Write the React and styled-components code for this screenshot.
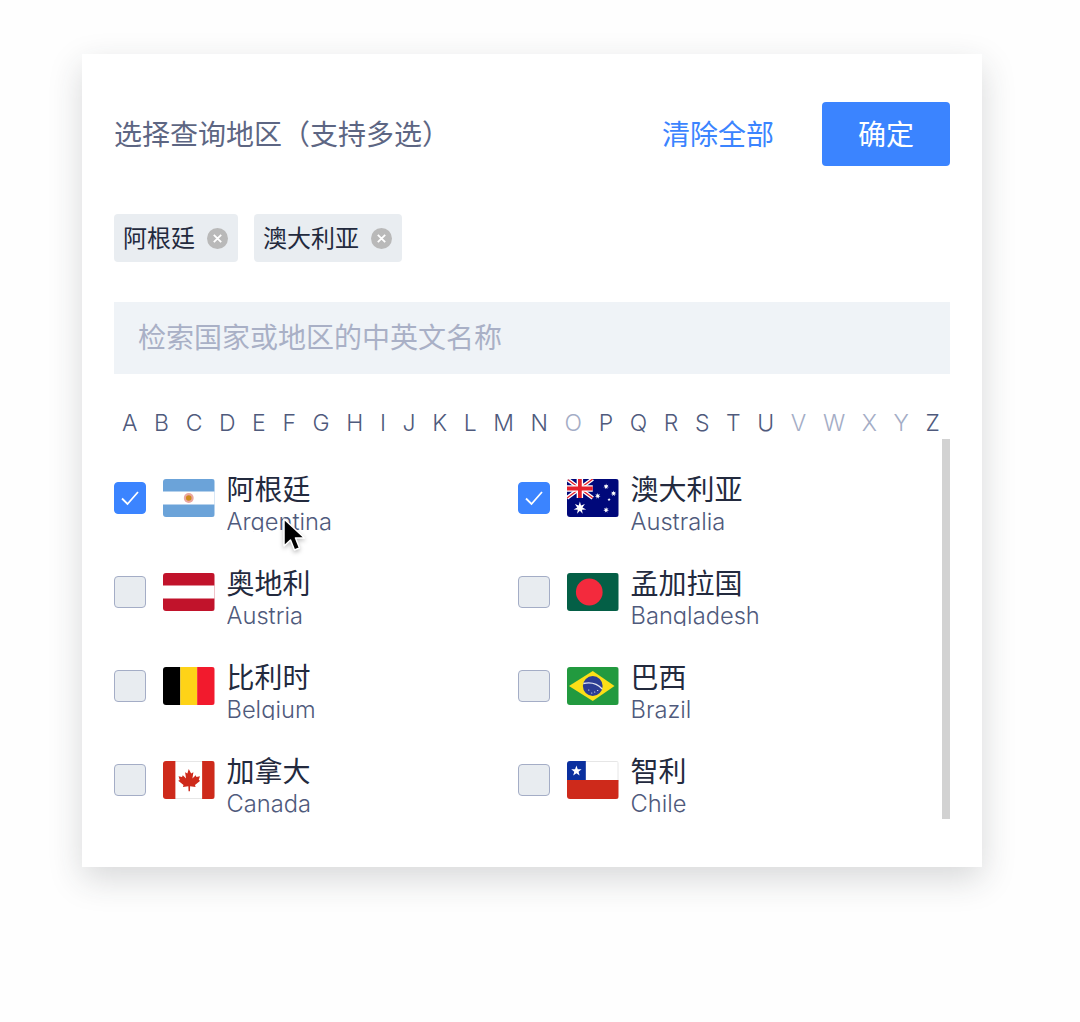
import React from 'react';
import styled, { createGlobalStyle } from 'styled-components';

const Global = createGlobalStyle`
  html, body { margin: 0; padding: 0; background: #fefefe; }
  body { font-family: "Noto Sans CJK SC", "Liberation Sans", sans-serif; }
  * { box-sizing: border-box; }
`;
const Page = styled.div`
  width: 1080px;
  height: 1022px;
  padding: 54px 98px 155px 82px;
  overflow: hidden;
  position: relative;
`;
const Card = styled.div`
  width: 900px;
  height: 813px;
  background: #fff;
  padding: 48px 32px 0;
  box-shadow: 0 12px 32px rgba(40, 44, 52, 0.18);
`;
const Header = styled.div`
  display: flex;
  align-items: center;
  height: 64px;
`;
const Title = styled.div`
  flex: 1;
  font-size: 28px;
  color: #5d6683;
  margin-bottom: 2px;
`;
const Clear = styled.div`
  font-size: 28px;
  color: #3b84ff;
  margin-right: 48px;
  margin-bottom: 2px;
`;
const Confirm = styled.div`
  width: 128px;
  height: 64px;
  background: #3b84ff;
  border-radius: 4px;
  color: #fff;
  font-size: 28px;
  padding-bottom: 2px;
  display: flex;
  align-items: center;
  justify-content: center;
`;
const Tags = styled.div`
  display: flex;
  gap: 16px;
  margin-top: 48px;
`;
const Tag = styled.div`
  height: 48px;
  background: #e9edf1;
  border-radius: 4px;
  padding: 0 10px 3px 9px;
  display: flex;
  align-items: center;
  gap: 12px;
  font-size: 24px;
  color: #232a3e;
`;
const TagClose = styled.svg`
  width: 21px;
  height: 21px;
  display: block;
  margin-top: 3px;
`;
const Search = styled.div`
  height: 72px;
  margin-top: 40px;
  background: #eff3f7;
  padding: 0 0 4px 24px;
  display: flex;
  align-items: center;
  font-size: 28px;
  color: #a9b0c6;
`;
const Letters = styled.div`
  display: flex;
  justify-content: space-between;
  padding: 0 10px 0 8px;
  margin-top: 32px;
  height: 33px;
  align-items: center;
`;
const Letter = styled.span`
  font-family: Inter, "Liberation Sans", sans-serif;
  font-size: 23px;
  font-weight: 300;
  color: ${p => (p.$off ? '#a4adc6' : '#4f5a7c')};
`;
const ListWrap = styled.div`
  display: flex;
  height: 380px;
`;
const List = styled.div`
  flex: 1;
  height: 380px;
  overflow: hidden;
  padding-top: 12px;
  display: grid;
  grid-template-columns: 404px 404px;
  grid-auto-rows: 94px;
`;
const Scrollbar = styled.div`
  width: 8px;
  height: 380px;
  background: #d2d2d2;
`;
const Row = styled.div`
  display: flex;
  align-items: center;
`;
const Check = styled.div`
  width: 32px;
  height: 32px;
  border-radius: 4px;
  flex: none;
  display: flex;
  align-items: center;
  justify-content: center;
  background: ${p => (p.$on ? '#3b84ff' : '#e8ecf0')};
  border: 1px solid ${p => (p.$on ? '#3b84ff' : '#a4adc6')};
`;
const FlagBox = styled.div`
  width: 51.5px;
  height: 38px;
  margin-left: 17px;
  margin-right: 12px;
  border-radius: 3px;
  overflow: hidden;
  flex: none;
  svg { display: block; width: 100%; height: 100%; }
`;
const Names = styled.div`
  height: 60px;
  overflow: hidden;
  margin-top: 8px;
`;
const Zh = styled.div`
  font-size: 28px;
  line-height: 32px;
  color: #232a3e;
`;
const En = styled.div`
  font-family: Inter, "Liberation Sans", sans-serif;
  font-size: 23.7px;
  font-weight: 300;
  line-height: 28px;
  margin-top: 4px;
  color: #4f5a7c;
  white-space: nowrap;
`;
const Cursor = styled.svg`
  position: absolute;
  left: 280px;
  top: 516px;
  width: 28px;
  height: 40px;
  filter: drop-shadow(0 2px 2px rgba(0,0,0,.25));
`;

const Tick = () => (
  <svg width="20" height="16" viewBox="0 0 20 16">
    <path d="M2 8.5 7.5 14 18 2" fill="none" stroke="#fff" strokeWidth="1.8" />
  </svg>
);

const Star = ({ x, y, r, n = 5, fill = '#fff' }) => {
  const pts = [];
  for (let i = 0; i < n * 2; i++) {
    const a = (Math.PI * i) / n - Math.PI / 2;
    const rr = i % 2 ? r * 0.42 : r;
    pts.push(`${(x + rr * Math.cos(a)).toFixed(2)},${(y + rr * Math.sin(a)).toFixed(2)}`);
  }
  return <polygon points={pts.join(' ')} fill={fill} />;
};

const Frame = ({ children }) => (
  <svg viewBox="0 0 52 38" preserveAspectRatio="none">
    {children}
  </svg>
);

const flags = {
  ar: (
    <Frame>
      <rect width="52" height="38" fill="#6ba3d9" />
      <rect y="12.500" width="52" height="13" fill="#fff" />
      <circle cx="26" cy="19" r="5" fill="#eba79f" />
      <circle cx="26" cy="19" r="2.800" fill="#cf8a1c" />
    </Frame>
  ),
  au: (
    <Frame>
      <rect width="52" height="38" fill="#00087a" />
      <path d="M0 0 26 19M26 0 0 19" stroke="#fff" strokeWidth="4" />
      <path d="M0 0 26 19M26 0 0 19" stroke="#e6202c" strokeWidth="1.400" />
      <path d="M13 0v19M0 9.500h26" stroke="#fff" strokeWidth="6.500" />
      <path d="M13 0v19M0 9.500h26" stroke="#e6202c" strokeWidth="3.800" />
      <Star x={13} y={29} r={6.5} n={7} />
      <Star x={39.5} y={7.5} r={3} n={7} />
      <Star x={31} y={17} r={3} n={7} />
      <Star x={47} y={14.5} r={3} n={7} />
      <Star x={42.5} y={20.5} r={1.8} />
      <Star x={39.5} y={31} r={3} n={7} />
    </Frame>
  ),
  at: (
    <Frame>
      <rect width="52" height="38" fill="#c1132b" />
      <rect y="12.500" width="52" height="13" fill="#fff" />
    </Frame>
  ),
  bd: (
    <Frame>
      <rect width="52" height="38" fill="#045f46" />
      <circle cx="22.500" cy="19" r="13.500" fill="#f32a3d" />
    </Frame>
  ),
  be: (
    <Frame>
      <rect width="17.500" height="38" fill="#000" />
      <rect x="17.500" width="17" height="38" fill="#fed317" />
      <rect x="34.500" width="17.500" height="38" fill="#f21a2d" />
    </Frame>
  ),
  br: (
    <Frame>
      <rect width="52" height="38" fill="#229a3f" />
      <polygon points="26,4 48,19 26,34 2,19" fill="#fbdf17" />
      <circle cx="26" cy="19" r="10" fill="#2b3d93" />
      <path d="M16.500 16.500c7-1.500 14 0 19 5.500" stroke="#dfe3ef" strokeWidth="1.400" fill="none" />
      <circle cx="22" cy="23" r=".6" fill="#fff" />
      <circle cx="28" cy="25" r=".6" fill="#fff" />
      <circle cx="31" cy="23.500" r=".6" fill="#fff" />
      <circle cx="25" cy="26" r=".6" fill="#fff" />
    </Frame>
  ),
  ca: (
    <Frame>
      <rect width="52" height="38" fill="#fff" />
      <rect x=".5" y=".5" width="51" height="37" rx="3" fill="none" stroke="#e6e6e6" />
      <rect width="12.500" height="38" fill="#ce2a1b" />
      <rect x="39.500" width="12.500" height="38" fill="#ce2a1b" />
      <path fill="#ce2a1b" d="M26 8l2.400 4.400 2.300-1.100-1 6.200 3.300-3.300.8 1.800 3.500-.7-1.200 3.600 1.500.8-5.300 4.400.6 2-5.500-.8-.2 5h-1.400l-.2-5-5.500.8.6-2-5.300-4.400 1.500-.8-1.200-3.600 3.500.7.8-1.800 3.300 3.300-1-6.200 2.300 1.100z" />
    </Frame>
  ),
  cl: (
    <Frame>
      <rect width="52" height="19" fill="#fff" />
      <rect x=".5" y=".5" width="51" height="20" fill="none" stroke="#e6e6e6" />
      <rect y="19" width="52" height="19" fill="#ce2a1b" />
      <rect width="19" height="19" fill="#0a2f9e" />
      <Star x={9.5} y={10} r={5.5} />
    </Frame>
  ),
};

const countries = [
  ['阿根廷', 'Argentina', 'ar', true],
  ['澳大利亚', 'Australia', 'au', true],
  ['奥地利', 'Austria', 'at', false],
  ['孟加拉国', 'Bangladesh', 'bd', false],
  ['比利时', 'Belgium', 'be', false],
  ['巴西', 'Brazil', 'br', false],
  ['加拿大', 'Canada', 'ca', false],
  ['智利', 'Chile', 'cl', false],
];

const off = 'OVWXY';

const Close = () => (
  <TagClose viewBox="0 0 21 21">
    <circle cx="10.500" cy="10.500" r="10.500" fill="#b9b9b9" />
    <path d="M6.800 6.800l7.400 7.400M14.200 6.800l-7.400 7.400" stroke="#fff" strokeWidth="1.800" />
  </TagClose>
);

export default function App() {
  return (
    <Page>
      <Global />
      <Card>
        <Header>
          <Title>选择查询地区（支持多选）</Title>
          <Clear>清除全部</Clear>
          <Confirm>确定</Confirm>
        </Header>
        <Tags>
          <Tag>阿根廷<Close /></Tag>
          <Tag>澳大利亚<Close /></Tag>
        </Tags>
        <Search>检索国家或地区的中英文名称</Search>
        <Letters>
          {'ABCDEFGHIJKLMNOPQRSTUVWXYZ'.split('').map(l => (
            <Letter key={l} $off={off.includes(l)}>{l}</Letter>
          ))}
        </Letters>
        <ListWrap>
          <List>
            {countries.map(([zh, en, code, on]) => (
              <Row key={code}>
                <Check $on={on}>{on && <Tick />}</Check>
                <FlagBox>{flags[code]}</FlagBox>
                <Names>
                  <Zh>{zh}</Zh>
                  <En>{en}</En>
                </Names>
              </Row>
            ))}
          </List>
          <Scrollbar />
        </ListWrap>
      </Card>
      <Cursor viewBox="0 0 28 40">
        <path d="M4 3v27l6.500-6 4 10 5-2-4-10h9z" fill="#000" stroke="#fff" strokeWidth="1.500" strokeLinejoin="round" />
      </Cursor>
    </Page>
  );
}
